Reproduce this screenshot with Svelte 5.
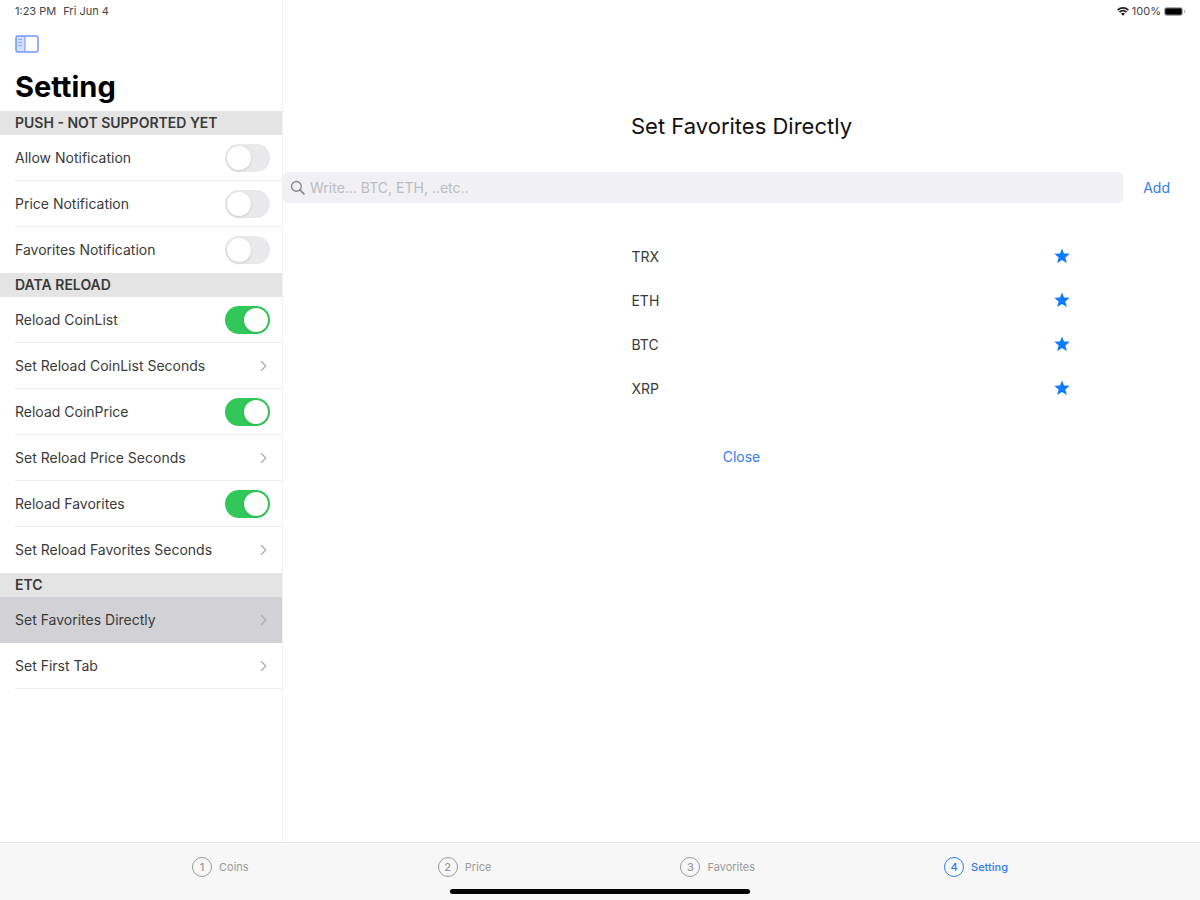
<script>
  let sections = $state([
    {
      title: 'PUSH - NOT SUPPORTED YET',
      rows: [
        { label: 'Allow Notification', kind: 'switch', on: false },
        { label: 'Price Notification', kind: 'switch', on: false },
        { label: 'Favorites Notification', kind: 'switch', on: false }
      ]
    },
    {
      title: 'DATA RELOAD',
      rows: [
        { label: 'Reload CoinList', kind: 'switch', on: true },
        { label: 'Set Reload CoinList Seconds', kind: 'link' },
        { label: 'Reload CoinPrice', kind: 'switch', on: true },
        { label: 'Set Reload Price Seconds', kind: 'link' },
        { label: 'Reload Favorites', kind: 'switch', on: true },
        { label: 'Set Reload Favorites Seconds', kind: 'link' }
      ]
    },
    {
      title: 'ETC',
      rows: [
        { label: 'Set Favorites Directly', kind: 'link' },
        { label: 'Set First Tab', kind: 'link' }
      ]
    }
  ]);
  let selected = $state('Set Favorites Directly');
  let activeTab = $state('Setting');
  let query = $state('');
  let coins = $state(['TRX', 'ETH', 'BTC', 'XRP']);
  const tabs = ['Coins', 'Price', 'Favorites', 'Setting'];

  function addCoin(event) {
    event.preventDefault();
    const name = query.trim().toUpperCase();
    if (name && !coins.includes(name)) coins.push(name);
    query = '';
  }
</script>

<div class="app">
  <div class="split">
    <aside class="sidebar">
      <div class="status"><span>1:23 PM</span><span>Fri Jun 4</span></div>
      <div class="toolbar">
        <button class="plain" aria-label="Toggle sidebar">
          <svg class="panel" viewBox="0 0 24 18" aria-hidden="true">
            <rect x="1" y="1" width="9" height="16" fill="#d3dffd" />
            <rect x="1" y="1" width="22" height="16" rx="2" fill="none" stroke="#6f98fb" stroke-width="1.5" />
            <path d="M10 1v16M3.5 4.5h3.5M3.5 7.5h3.5M3.5 10.5h3.5" fill="none" stroke="#7fa3fb" stroke-width="1.2" />
          </svg>
        </button>
      </div>
      <h1>Setting</h1>
      {#each sections as section}
        <section>
          <h2>{section.title}</h2>
          <ul>
            {#each section.rows as row}
              <li class:selected={selected === row.label}>
                {#if row.kind === 'switch'}
                  <label class="row">
                    <span>{row.label}</span>
                    <input class="switch" type="checkbox" role="switch" bind:checked={row.on} />
                  </label>
                {:else}
                  <button class="row" onclick={() => (selected = row.label)}>
                    <span>{row.label}</span>
                    <svg class="chevron" viewBox="0 0 8 12" aria-hidden="true">
                      <path d="M1.5 1.5 5.8 6 1.5 10.5" fill="none" stroke="#b0b0b4" stroke-width="1.4" stroke-linecap="round" stroke-linejoin="round" />
                    </svg>
                  </button>
                {/if}
              </li>
            {/each}
          </ul>
        </section>
      {/each}
    </aside>

    <main>
      <div class="status end">
        <svg class="wifi" viewBox="0 0 12 9" aria-hidden="true">
          <path d="M.6 3.1a7.8 7.8 0 0 1 10.8 0M2.5 5.2a5 5 0 0 1 7 0" fill="none" stroke="#222" stroke-width="1.8" />
          <path d="M6 8.8 4 6.7a2.9 2.9 0 0 1 4 0z" fill="#222" />
        </svg>
        <span>100%</span>
        <svg class="battery" viewBox="0 0 22 9" aria-hidden="true">
          <rect x=".5" y=".5" width="18" height="8" rx="2" fill="none" stroke="#aaa" />
          <rect x="1.2" y="1.2" width="16.6" height="6.6" rx="1.2" fill="#000" />
          <path d="M20 3v3q1.3-.4 1.3-1.5T20 3z" fill="#aaa" />
        </svg>
      </div>
      <h3>Set Favorites Directly</h3>
      <form onsubmit={addCoin}>
        <label class="search">
          <svg class="glass" viewBox="0 0 16 16" aria-hidden="true">
            <circle cx="6.8" cy="6.8" r="5.2" fill="none" stroke="#85858a" stroke-width="1.4" />
            <path d="m10.6 10.6 4.2 4.2" stroke="#85858a" stroke-width="1.7" stroke-linecap="round" />
          </svg>
          <input type="text" aria-label="Coin names" placeholder="Write... BTC, ETH, ..etc.." bind:value={query} />
        </label>
        <button class="plain action">Add</button>
      </form>
      <ul class="coins">
        {#each coins as coin}
          <li>
            <span>{coin}</span>
            <button class="plain" aria-label="Remove {coin}" onclick={() => (coins = coins.filter((c) => c !== coin))}>
              <svg class="star" viewBox="0 0 16 16" aria-hidden="true">
                <path d="M8 .4 10 5.6l5.7.2-4.4 3.6 1.6 5.7L8 11.9l-4.9 3.2 1.6-5.7L.3 5.8 6 5.6z" fill="#0a7aff" />
              </svg>
            </button>
          </li>
        {/each}
      </ul>
      <button class="plain action close">Close</button>
    </main>
  </div>

  <footer>
    <nav>
      {#each tabs as tab, i}
        <button class="plain tab" class:active={activeTab === tab} onclick={() => (activeTab = tab)}>
          <span class="number">{i + 1}</span>
          <span>{tab}</span>
        </button>
      {/each}
    </nav>
    <div class="home"></div>
  </footer>
</div>

<style>
  :global(body) {
    margin: 0;
    background: #fff;
  }
  .app {
    min-height: 100vh;
    display: flex;
    flex-direction: column;
    font-family: Inter, 'Liberation Sans', sans-serif;
    font-size: 14px;
    color: #3a3a3a;
  }
  .app * {
    box-sizing: border-box;
  }
  button,
  input {
    font: inherit;
    color: inherit;
  }
  button {
    cursor: pointer;
  }
  ul {
    list-style: none;
    margin: 0;
    padding: 0;
  }
  svg {
    display: block;
    flex: none;
  }
  .plain {
    border: 0;
    padding: 0;
    background: none;
  }
  .split {
    flex: 1;
    display: grid;
    grid-template-columns: minmax(283px, 23%) 1fr;
  }
  .sidebar {
    border-right: 1px solid #f2f2f2;
  }
  .status {
    display: flex;
    align-items: center;
    gap: 7px;
    height: 22px;
    padding: 0 15px;
    font-size: 11px;
    color: #444;
  }
  .status.end {
    justify-content: flex-end;
    gap: 3px;
    padding: 0 14px;
  }
  .wifi {
    width: 12px;
    height: 9px;
  }
  .battery {
    width: 22px;
    height: 9px;
  }
  .toolbar {
    display: flex;
    align-items: center;
    height: 44px;
    padding: 0 15px;
  }
  .panel {
    width: 24px;
    height: 18px;
  }
  h1 {
    margin: 0;
    padding: 0 15px;
    height: 45px;
    font-size: 29px;
    line-height: 42px;
    font-weight: 700;
    color: #000;
  }
  h2 {
    margin: 0;
    padding: 0 15px;
    font-size: 14px;
    line-height: 24px;
    font-weight: 600;
    background: #e4e4e4;
    color: #3a3a3a;
  }
  .row {
    display: flex;
    align-items: center;
    justify-content: space-between;
    width: 100%;
    height: 46px;
    padding: 0 12px 0 0;
    border: 0;
    border-bottom: 1px solid #ececec;
    background: none;
    text-align: left;
    cursor: pointer;
  }
  section li {
    padding-left: 15px;
  }
  section:not(:last-child) li:last-child .row,
  .selected .row {
    border-bottom-color: transparent;
  }
  .selected {
    background: #d1d1d6;
  }
  .switch {
    appearance: none;
    display: flex;
    width: 45px;
    height: 28px;
    margin: 0;
    padding: 2px;
    border-radius: 14px;
    background: #e9e9eb;
    cursor: pointer;
  }
  .switch::before {
    content: '';
    width: 24px;
    height: 24px;
    border-radius: 50%;
    background: #fff;
    box-shadow: 0 1px 3px #0002;
  }
  .switch:checked {
    justify-content: flex-end;
    background: #31c859;
  }
  .chevron {
    width: 8px;
    height: 12px;
    margin-right: 2px;
  }
  main {
    display: flex;
    flex-direction: column;
  }
  h3 {
    margin: 88px 0 30px;
    font-size: 22px;
    line-height: 32px;
    font-weight: 400;
    text-align: center;
    color: #111;
  }
  form {
    display: flex;
    align-items: center;
    gap: 20px;
    padding-right: 30px;
  }
  .search {
    flex: 1;
    display: flex;
    align-items: center;
    gap: 5px;
    height: 31px;
    padding: 0 7px;
    border-radius: 5px;
    background: #f0f0f5;
  }
  .search input {
    flex: 1;
    min-width: 0;
    border: 0;
    padding: 0;
    outline: 0;
    background: none;
  }
  .search input::placeholder {
    color: #bcbcc1;
    opacity: 1;
  }
  .glass {
    width: 15px;
    height: 15px;
  }
  .action {
    color: #2f7cf6;
  }
  .coins {
    padding: 31px 130px 0 38%;
  }
  .coins li {
    display: flex;
    align-items: center;
    justify-content: space-between;
    height: 44px;
  }
  .star {
    width: 16px;
    height: 16px;
  }
  .close {
    align-self: center;
    margin-top: 35px;
    line-height: 24px;
  }
  footer {
    border-top: 1px solid #e6e6e6;
    background: #f7f7f7;
    padding-bottom: 6px;
  }
  nav {
    display: flex;
    justify-content: space-between;
    align-items: center;
    height: 46px;
    padding: 2px 16% 0;
  }
  .tab {
    display: flex;
    align-items: center;
    gap: 7px;
    font-size: 11px;
    color: #999;
  }
  .number {
    width: 20px;
    height: 20px;
    border: 1px solid #999;
    border-radius: 50%;
    line-height: 18px;
    text-align: center;
    font-weight: 500;
  }
  .tab.active {
    color: #2f7cf6;
    font-weight: 500;
  }
  .active .number {
    border-color: #2f7cf6;
  }
  .home {
    width: 25%;
    height: 5px;
    margin: 0 auto;
    border-radius: 3px;
    background: #000;
  }
</style>
